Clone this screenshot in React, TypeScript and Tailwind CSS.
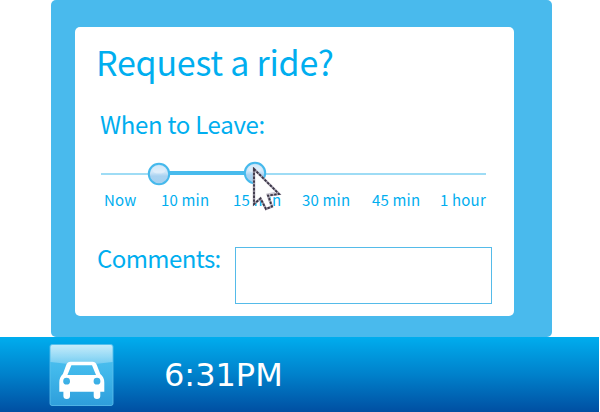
import React from "react";

function Knob({ id }: { id: string }) {
  return (
    <svg width="24" height="24" viewBox="0 0 24 24" className="block">
      <defs>
        <linearGradient id={id} x1="0" y1="0" x2="0" y2="1">
          <stop offset="0" stopColor="#b9dcf5" />
          <stop offset="0.4" stopColor="#d3e8f9" />
          <stop offset="0.6" stopColor="#a9d2f1" />
          <stop offset="1" stopColor="#a3d0f0" />
        </linearGradient>
      </defs>
      <circle cx="12" cy="12" r="10.2" fill={`url(#${id})`} stroke="#45b9ec" strokeWidth="2" />
      <ellipse cx="12" cy="7.6" rx="6.8" ry="4" fill="#fff" fillOpacity="0.3" />
    </svg>
  );
}

function Pointer() {
  return (
    <svg width="30" height="46" viewBox="0 0 30 46" className="block">
      <path
        d="M2 2 L2 37 L8.5 31.5 L14 42 L20 39.5 L16 28.5 L27 27 Z"
        fill="#fdfdfe"
        stroke="#a29cab"
        strokeWidth="2.4"
      />
      <path d="M14.5 27.5 L23 26 M16.5 31 L19 38.5" fill="none" stroke="#c9c6d0" strokeWidth="2" />
      <path
        d="M2 2 L2 37 L8.5 31.5 L14 42 L20 39.5 L16 28.5 L27 27 Z"
        fill="none"
        stroke="#3a3546"
        strokeWidth="1.8"
        strokeDasharray="2.4 1.4"
      />
    </svg>
  );
}

function CarButton() {
  return (
    <svg width="66" height="64" viewBox="0 0 66 64" className="block">
      <defs>
        <linearGradient id="tile" x1="0" y1="0" x2="0" y2="1">
          <stop offset="0" stopColor="#55c5f1" />
          <stop offset="0.45" stopColor="#41b8eb" />
          <stop offset="1" stopColor="#2e9edb" />
        </linearGradient>
        <linearGradient id="gloss" x1="0" y1="0" x2="0" y2="1">
          <stop offset="0" stopColor="#fff" stopOpacity="0.66" />
          <stop offset="1" stopColor="#fff" stopOpacity="0.24" />
        </linearGradient>
      </defs>
      <rect x="1" y="1.5" width="63" height="61" rx="2" fill="url(#tile)" stroke="#5dc2ee" strokeOpacity="0.8" />
      <path d="M1.5 4 Q1.5 2 3.5 2 H61.5 Q63.5 2 63.5 4 V19 Q33 23.5 1.5 19 Z" fill="url(#gloss)" />
      <path
        fill="#fff"
        fillRule="evenodd"
        d="M21.5 18.8 H43.5 Q46.5 18.8 47.7 21.8 L51.3 31 Q55.3 34 55.3 39.5 V48.7 H51.3 V53 Q51.3 56 48 56 Q44.7 56 44.7 53 V48.7 H21 V53 Q21 56 17.7 56 Q14.4 56 14.4 53 V48.7 H10.3 V39.5 Q10.3 34 13.9 31 L17.3 21.8 Q18.5 18.8 21.5 18.8 Z M22.4 22.3 L18.4 32 H47 L43 22.3 Z M17.6 34.8 A3.4 3.4 0 1 0 17.6 41.6 A3.4 3.4 0 1 0 17.6 34.8 Z M48 34.8 A3.4 3.4 0 1 0 48 41.6 A3.4 3.4 0 1 0 48 34.8 Z"
      />
    </svg>
  );
}

export default function App() {
  return (
    <div className="flex h-[412px] w-[600px] flex-col overflow-hidden bg-white font-['Noto_Sans_CJK_SC','Open_Sans',sans-serif] text-[#00aeef]">
      <div className="ml-[51px] h-[337px] w-[501px] rounded-[5px] bg-[#49baed] pt-[27px] pl-6">
        <main className="h-[289px] w-[439px] rounded-[5px] bg-white pl-[22px]">
          <h1 className="-ml-px h-[74px] pt-[15px] text-[34px] leading-[40px] tracking-[-0.24px] whitespace-nowrap">Request a ride?</h1>
          <h2 className="h-[60px] pt-[8px] pl-[3px] text-[24px] leading-[30px] tracking-[-0.3px] whitespace-nowrap">When to Leave:</h2>
          <div className="relative h-[26px] pl-1">
            <div className="pt-[12px]">
              <div className="h-[2px] w-[385px] bg-[#9edcf5]" />
            </div>
            <div className="absolute top-[10px] left-[62px] h-1 w-[97px] bg-[#48bbed]" />
            <div className="absolute top-[1px] left-[50px]">
              <Knob id="knob-start" />
            </div>
            <div className="absolute top-0 left-[146px]">
              <Knob id="knob-end" />
            </div>
            <div className="absolute top-[6px] left-[155px] z-10">
              <Pointer />
            </div>
          </div>
          <div className="flex h-[56px] pt-[3px] pl-[7px] text-[15px] leading-5 tracking-[0.18px] whitespace-nowrap">
            <span className="w-[57px]">Now</span>
            <span className="w-[72px]">10 min</span>
            <span className="w-[69px]">15 min</span>
            <span className="w-[70px]">30 min</span>
            <span className="w-[68px]">45 min</span>
            <span>1 hour</span>
          </div>
          <div className="flex pt-[4px]">
            <label htmlFor="comments" className="-mt-[4px] w-[138px] text-[24px] leading-[30px] tracking-[-0.58px] whitespace-nowrap">Comments:</label>
            <div className="h-[57px] w-[257px] border border-[#55bbe9]">
              <textarea id="comments" className="block h-full w-full resize-none border-0 bg-white outline-none" />
            </div>
          </div>
        </main>
      </div>
      <footer className="flex h-[75px] w-[599px] bg-linear-to-b from-[#00adee] via-[#0081cb] to-[#004fa2] pt-[6px] pl-[49px]">
        <CarButton />
        <time className="pt-[12px] pl-[49px] font-['DejaVu_Sans',sans-serif] text-[32px] leading-[40px] text-white">6:31PM</time>
      </footer>
    </div>
  );
}
